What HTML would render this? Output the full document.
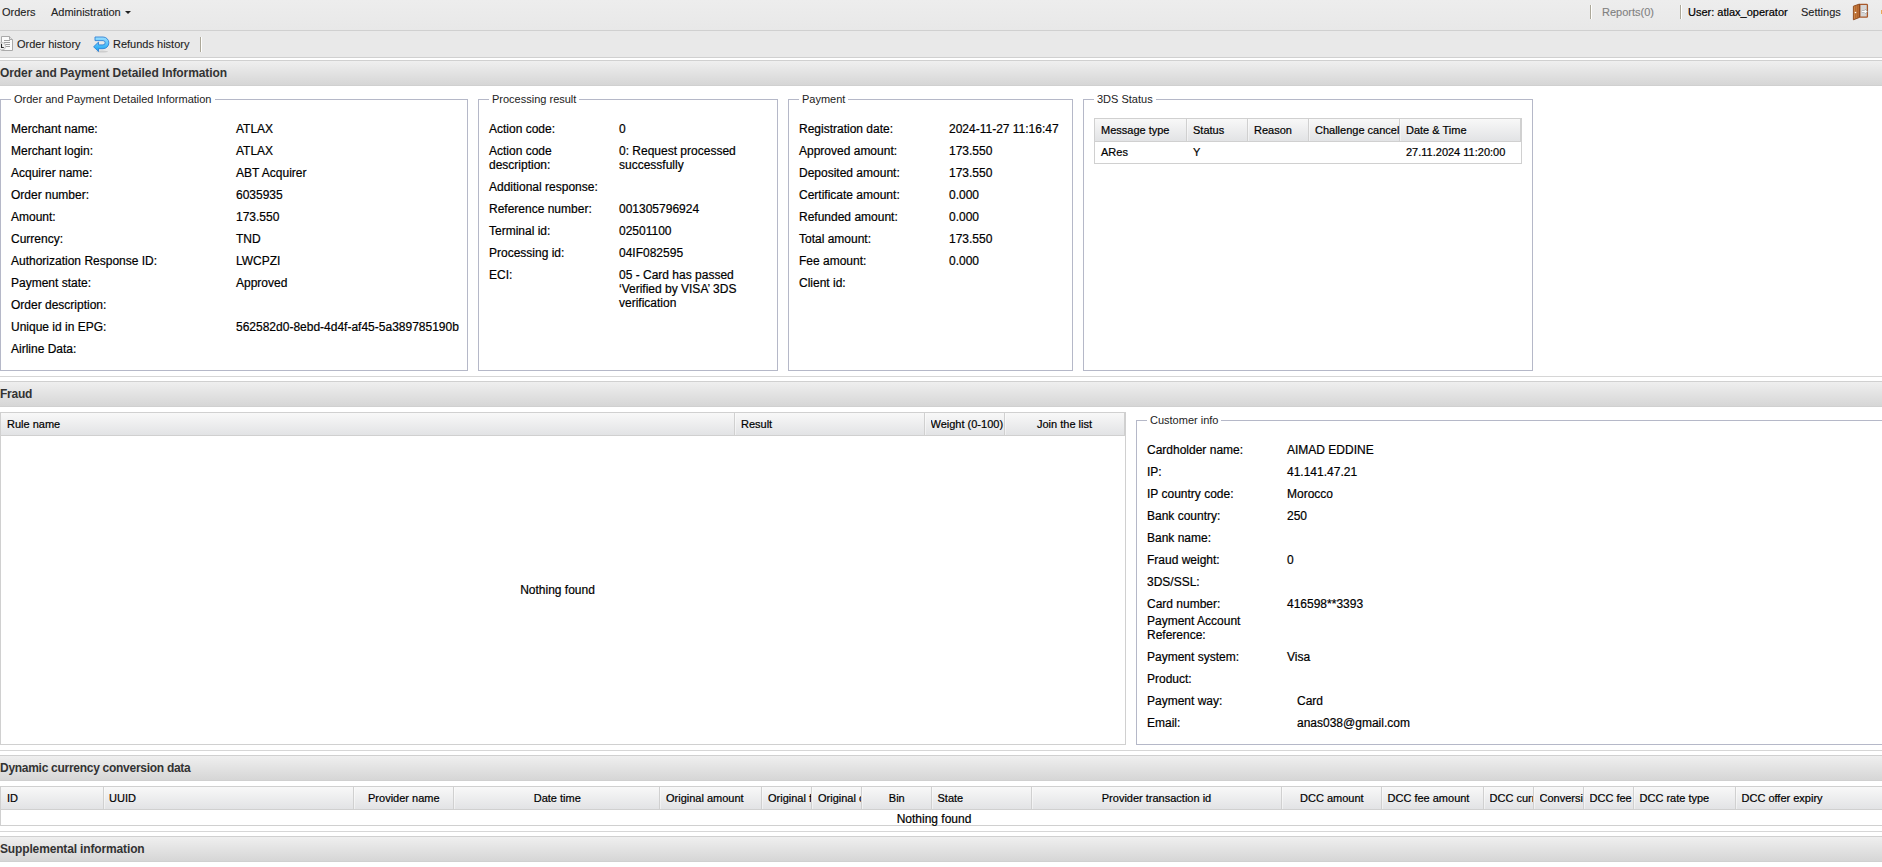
<!DOCTYPE html>
<html><head><meta charset="utf-8"><style>
*{box-sizing:border-box;margin:0;padding:0}
html,body{width:1882px;height:867px;overflow:hidden;background:#fff}
body{font-family:"Liberation Sans",sans-serif;font-size:12px;color:#000;position:relative}
.a{position:absolute}
.t{position:absolute;line-height:14px;white-space:nowrap;-webkit-text-stroke:0.2px #000}
#top{left:0;top:0;width:1882px;height:31px;background:linear-gradient(#ededed,#e8e8e8);border-bottom:1px solid #d0d0d0}
#tb{left:0;top:31px;width:1882px;height:27px;background:#e9e9e9;border-bottom:1px solid #d0d0d0}
.hdr{position:absolute;left:0;width:1882px;height:26px;border-top:1px solid #d0d0d0;border-bottom:1px solid #d0d0d0;background:linear-gradient(#efefef,#d6d6d6)}
.hdr div{position:absolute;left:0;top:5px;line-height:14px;font-weight:bold;color:#333;letter-spacing:-0.1px;white-space:nowrap}
.hr{position:absolute;left:0;width:1882px;height:1px;background:#d6d6d6}
.fs{position:absolute;border:1px solid #b5b8c8}
.lg{position:absolute;font-size:11px;line-height:14px;background:#fff;padding:0 3px;white-space:nowrap;color:#222}
.grid{position:absolute;border:1px solid #d0d0d0;background:#fff}
.gh{position:absolute;left:0;top:0;right:0;height:23px;background:linear-gradient(#f8f8f8,#e2e3e5);border-bottom:1px solid #d0d0d0}
.sep{position:absolute;top:0;width:2px;height:22px;border-left:1px solid #d0d0d0;border-right:1px solid rgba(255,255,255,0.45)}
.g{font-size:11px}
</style></head><body>
<div id="top" class="a">
<div class="t" style="left:2px;top:5px;font-size:11px;color:#222;-webkit-text-stroke:0.1px #222">Orders</div>
<div class="t" style="left:51px;top:5px;font-size:11px;color:#222;-webkit-text-stroke:0.1px #222">Administration</div>
<div class="a" style="left:125px;top:11px;width:0;height:0;border-left:3px solid transparent;border-right:3px solid transparent;border-top:3px solid #222"></div>
<div class="a" style="left:1590px;top:5px;width:1px;height:14px;background:#aca899;box-shadow:1px 0 0 #fff"></div>
<div class="t" style="left:1602px;top:5px;font-size:11px;color:#808080;-webkit-text-stroke:0.1px #808080">Reports(0)</div>
<div class="a" style="left:1680px;top:5px;width:1px;height:14px;background:#aca899;box-shadow:1px 0 0 #fff"></div>
<div class="t" style="left:1688px;top:5px;font-size:11px;color:#000">User: atlax_operator</div>
<div class="t" style="left:1801px;top:5px;font-size:11px;color:#222;-webkit-text-stroke:0.1px #222">Settings</div>
<svg class="a" style="left:1846px;top:0" width="26" height="24" viewBox="0 0 26 24"><defs><linearGradient id="dg" x1="0" y1="0" x2="1" y2="0"><stop offset="0" stop-color="#d08848"/><stop offset="1" stop-color="#b86a30"/></linearGradient></defs><rect x="13.8" y="4.4" width="7.6" height="12.8" rx="0.8" fill="#d6d6d6" stroke="#a8582a" stroke-width="1.3"/><path d="M15.8 11.6 H20.2 M18.6 9.8 L20.4 11.6 L18.6 13.4" stroke="#999" stroke-width="2.2" fill="none"/><path d="M15.8 11.6 H20.2 M18.6 9.8 L20.4 11.6 L18.6 13.4" stroke="#fff" stroke-width="1.1" fill="none"/><path d="M7.4 6.2 L13.5 4 V17.4 L7.4 19.8 Z" fill="url(#dg)" stroke="#8a4418" stroke-width="0.9" stroke-linejoin="round"/><path d="M9.6 5.6 V18.8 M11.6 4.9 V18" stroke="#a85a24" stroke-width="0.6"/><circle cx="9.5" cy="12.5" r="0.8" fill="#fff"/></svg>
<div class="a" style="left:1881px;top:10px;width:3px;height:4px;background:linear-gradient(90deg,#f0b060,#c8782a)"></div>
</div>
<div id="tb" class="a">
</div>
<svg class="a" style="left:0;top:32px" width="20" height="24" viewBox="0 0 20 24"><path d="M1.5 4.5 H9.5 L12.5 7.5 V18.5 H1.5 Z" fill="#fbfbfb" stroke="#a9a9a9"/><path d="M9.5 4.5 V7.5 H12.5" fill="#e0e0e0" stroke="#a9a9a9"/><path d="M4 8.5 H10 M4 10.5 H10 M5 12.5 H10 M6 14.5 H10" stroke="#a0a0a0"/><circle cx="1.8" cy="14.2" r="3.8" fill="#f2f2f2" stroke="#c4c4c4"/><path d="M1.5 11.8 V15.5 H3.8" stroke="#2a2a2a" stroke-width="1.1" fill="none"/></svg>
<div class="t" style="left:17px;top:37px;font-size:11px;color:#222;-webkit-text-stroke:0.1px #222">Order history</div>
<svg class="a" style="left:90px;top:33px" width="22" height="22" viewBox="0 0 22 22"><defs><linearGradient id="rg" x1="0" y1="0" x2="0" y2="1"><stop offset="0" stop-color="#9ee0ff"/><stop offset="1" stop-color="#12a2f2"/></linearGradient></defs><ellipse cx="12" cy="18.6" rx="6" ry="1" fill="#bbb" opacity="0.6"/><path d="M5 4 H13 A5.85 5.85 0 0 1 13 15.7 H8.5 V18.5 L3.6 13.8 L8.5 9.1 V11.9 H13 A2.15 2.15 0 0 0 13 7.6 H5 Z" fill="url(#rg)" stroke="#2f82d6" stroke-width="0.9" stroke-linejoin="round"/></svg>
<div class="t" style="left:113px;top:37px;font-size:11px;color:#222;-webkit-text-stroke:0.1px #222">Refunds history</div>
<div class="a" style="left:200px;top:37px;width:1px;height:15px;background:#aca899;box-shadow:1px 0 0 #fff"></div>
<div class="hdr" style="top:60px"><div style="letter-spacing:-0.08px">Order and Payment Detailed Information</div></div>
<div class="hr" style="top:376px"></div>
<div class="hdr" style="top:381px"><div style="letter-spacing:-0.26px">Fraud</div></div>
<div class="hr" style="top:750px"></div>
<div class="hdr" style="top:755px"><div style="letter-spacing:-0.28px">Dynamic currency conversion data</div></div>
<div class="hr" style="top:831px"></div>
<div class="hdr" style="top:836px"><div style="letter-spacing:-0.146px">Supplemental information</div></div>
<div class="fs" style="left:0px;top:99px;width:468px;height:272px"></div>
<div class="lg" style="left:11px;top:92px">Order and Payment Detailed Information</div>
<div class="fs" style="left:478px;top:99px;width:300px;height:272px"></div>
<div class="lg" style="left:489px;top:92px">Processing result</div>
<div class="fs" style="left:788px;top:99px;width:285px;height:272px"></div>
<div class="lg" style="left:799px;top:92px">Payment</div>
<div class="fs" style="left:1083px;top:99px;width:450px;height:272px"></div>
<div class="lg" style="left:1094px;top:92px">3DS Status</div>
<div class="t" style="left:11px;top:122px;font-size:12px;">Merchant name:</div>
<div class="t" style="left:236px;top:122px;font-size:12px;">ATLAX</div>
<div class="t" style="left:11px;top:144px;font-size:12px;">Merchant login:</div>
<div class="t" style="left:236px;top:144px;font-size:12px;">ATLAX</div>
<div class="t" style="left:11px;top:166px;font-size:12px;">Acquirer name:</div>
<div class="t" style="left:236px;top:166px;font-size:12px;">ABT Acquirer</div>
<div class="t" style="left:11px;top:188px;font-size:12px;">Order number:</div>
<div class="t" style="left:236px;top:188px;font-size:12px;">6035935</div>
<div class="t" style="left:11px;top:210px;font-size:12px;">Amount:</div>
<div class="t" style="left:236px;top:210px;font-size:12px;">173.550</div>
<div class="t" style="left:11px;top:232px;font-size:12px;">Currency:</div>
<div class="t" style="left:236px;top:232px;font-size:12px;">TND</div>
<div class="t" style="left:11px;top:254px;font-size:12px;">Authorization Response ID:</div>
<div class="t" style="left:236px;top:254px;font-size:12px;">LWCPZI</div>
<div class="t" style="left:11px;top:276px;font-size:12px;">Payment state:</div>
<div class="t" style="left:236px;top:276px;font-size:12px;">Approved</div>
<div class="t" style="left:11px;top:298px;font-size:12px;">Order description:</div>
<div class="t" style="left:11px;top:320px;font-size:12px;">Unique id in EPG:</div>
<div class="t" style="left:236px;top:320px;font-size:12px;">562582d0-8ebd-4d4f-af45-5a389785190b</div>
<div class="t" style="left:11px;top:342px;font-size:12px;">Airline Data:</div>
<div class="t" style="left:489px;top:122px;font-size:12px;">Action code:</div>
<div class="t" style="left:619px;top:122px;font-size:12px;">0</div>
<div class="t" style="left:489px;top:144px;font-size:12px;">Action code</div>
<div class="t" style="left:489px;top:158px;font-size:12px;">description:</div>
<div class="t" style="left:619px;top:144px;font-size:12px;">0: Request processed</div>
<div class="t" style="left:619px;top:158px;font-size:12px;">successfully</div>
<div class="t" style="left:489px;top:180px;font-size:12px;">Additional response:</div>
<div class="t" style="left:489px;top:202px;font-size:12px;">Reference number:</div>
<div class="t" style="left:619px;top:202px;font-size:12px;">001305796924</div>
<div class="t" style="left:489px;top:224px;font-size:12px;">Terminal id:</div>
<div class="t" style="left:619px;top:224px;font-size:12px;">02501100</div>
<div class="t" style="left:489px;top:246px;font-size:12px;">Processing id:</div>
<div class="t" style="left:619px;top:246px;font-size:12px;">04IF082595</div>
<div class="t" style="left:489px;top:268px;font-size:12px;">ECI:</div>
<div class="t" style="left:619px;top:268px;font-size:12px;">05 - Card has passed</div>
<div class="t" style="left:619px;top:282px;font-size:12px;">&#8216;Verified by VISA&#8217; 3DS</div>
<div class="t" style="left:619px;top:296px;font-size:12px;">verification</div>
<div class="t" style="left:799px;top:122px;font-size:12px;">Registration date:</div>
<div class="t" style="left:949px;top:122px;font-size:12px;">2024-11-27 11:16:47</div>
<div class="t" style="left:799px;top:144px;font-size:12px;">Approved amount:</div>
<div class="t" style="left:949px;top:144px;font-size:12px;">173.550</div>
<div class="t" style="left:799px;top:166px;font-size:12px;">Deposited amount:</div>
<div class="t" style="left:949px;top:166px;font-size:12px;">173.550</div>
<div class="t" style="left:799px;top:188px;font-size:12px;">Certificate amount:</div>
<div class="t" style="left:949px;top:188px;font-size:12px;">0.000</div>
<div class="t" style="left:799px;top:210px;font-size:12px;">Refunded amount:</div>
<div class="t" style="left:949px;top:210px;font-size:12px;">0.000</div>
<div class="t" style="left:799px;top:232px;font-size:12px;">Total amount:</div>
<div class="t" style="left:949px;top:232px;font-size:12px;">173.550</div>
<div class="t" style="left:799px;top:254px;font-size:12px;">Fee amount:</div>
<div class="t" style="left:949px;top:254px;font-size:12px;">0.000</div>
<div class="t" style="left:799px;top:276px;font-size:12px;">Client id:</div>
<div class="grid" style="left:1094px;top:118px;width:428px;height:46px"><div class="gh"></div><div class="sep" style="left:91px"></div><div class="sep" style="left:152px"></div><div class="sep" style="left:213px"></div><div class="sep" style="left:304px"></div><div class="a" style="left:425px;top:0;width:1px;height:22px;background:#d0d0d0"></div></div>
<div class="t" style="left:1101px;top:123px;font-size:11px;">Message type</div>
<div class="t" style="left:1193px;top:123px;font-size:11px;">Status</div>
<div class="t" style="left:1254px;top:123px;font-size:11px;">Reason</div>
<div class="t" style="left:1315px;top:123px;font-size:11px;">Challenge cancel</div>
<div class="t" style="left:1406px;top:123px;font-size:11px;">Date &amp; Time</div>
<div class="t" style="left:1101px;top:145px;font-size:11px;">ARes</div>
<div class="t" style="left:1193px;top:145px;font-size:11px;">Y</div>
<div class="t" style="left:1406px;top:145px;font-size:11px;">27.11.2024 11:20:00</div>
<div class="grid" style="left:0;top:412px;width:1126px;height:333px"><div class="gh"></div><div class="sep" style="left:733px"></div><div class="sep" style="left:923px"></div><div class="sep" style="left:1003px"></div><div class="a" style="left:1123px;top:0;width:1px;height:22px;background:#d0d0d0"></div></div>
<div class="t" style="left:7px;top:417px;font-size:11px;">Rule name</div>
<div class="t" style="left:741px;top:417px;font-size:11px;">Result</div>
<div class="t" style="left:930.5px;width:73.5px;overflow:hidden;top:417px;font-size:11px">Weight (0-100)</div>
<div class="t" style="left:914.5px;width:300px;text-align:center;top:417px;font-size:11px">Join the list</div>
<div class="t" style="left:407.5px;width:300px;text-align:center;top:583px;font-size:12px">Nothing found</div>
<div class="fs" style="left:1136px;top:420px;width:755px;height:325px"></div>
<div class="lg" style="left:1147px;top:413px">Customer info</div>
<div class="t" style="left:1147px;top:443px;font-size:12px;">Cardholder name:</div>
<div class="t" style="left:1287px;top:443px;font-size:12px;">AIMAD EDDINE</div>
<div class="t" style="left:1147px;top:465px;font-size:12px;">IP:</div>
<div class="t" style="left:1287px;top:465px;font-size:12px;">41.141.47.21</div>
<div class="t" style="left:1147px;top:487px;font-size:12px;">IP country code:</div>
<div class="t" style="left:1287px;top:487px;font-size:12px;">Morocco</div>
<div class="t" style="left:1147px;top:509px;font-size:12px;">Bank country:</div>
<div class="t" style="left:1287px;top:509px;font-size:12px;">250</div>
<div class="t" style="left:1147px;top:531px;font-size:12px;">Bank name:</div>
<div class="t" style="left:1147px;top:553px;font-size:12px;">Fraud weight:</div>
<div class="t" style="left:1287px;top:553px;font-size:12px;">0</div>
<div class="t" style="left:1147px;top:575px;font-size:12px;">3DS/SSL:</div>
<div class="t" style="left:1147px;top:597px;font-size:12px;">Card number:</div>
<div class="t" style="left:1287px;top:597px;font-size:12px;">416598**3393</div>
<div class="t" style="left:1147px;top:614px;font-size:12px;">Payment Account</div>
<div class="t" style="left:1147px;top:628px;font-size:12px;">Reference:</div>
<div class="t" style="left:1147px;top:650px;font-size:12px;">Payment system:</div>
<div class="t" style="left:1287px;top:650px;font-size:12px;">Visa</div>
<div class="t" style="left:1147px;top:672px;font-size:12px;">Product:</div>
<div class="t" style="left:1147px;top:694px;font-size:12px;">Payment way:</div>
<div class="t" style="left:1297px;top:694px;font-size:12px;">Card</div>
<div class="t" style="left:1147px;top:716px;font-size:12px;">Email:</div>
<div class="t" style="left:1297px;top:716px;font-size:12px;">anas038@gmail.com</div>
<div class="grid" style="left:0;top:786px;width:1890px;height:40px"><div class="gh"></div><div class="sep" style="left:102px"></div><div class="sep" style="left:352px"></div><div class="sep" style="left:452px"></div><div class="sep" style="left:658px"></div><div class="sep" style="left:760px"></div><div class="sep" style="left:810px"></div><div class="sep" style="left:860px"></div><div class="sep" style="left:930px"></div><div class="sep" style="left:1030px"></div><div class="sep" style="left:1280px"></div><div class="sep" style="left:1380px"></div><div class="sep" style="left:1482px"></div><div class="sep" style="left:1532px"></div><div class="sep" style="left:1582px"></div><div class="sep" style="left:1632px"></div><div class="sep" style="left:1734px"></div></div>
<div class="t" style="left:7px;top:791px;font-size:11px;">ID</div>
<div class="t" style="left:109px;top:791px;font-size:11px;">UUID</div>
<div class="t" style="left:253.8px;width:300px;text-align:center;top:791px;font-size:11px">Provider name</div>
<div class="t" style="left:407.29999999999995px;width:300px;text-align:center;top:791px;font-size:11px">Date time</div>
<div class="t" style="left:666px;top:791px;font-size:11px;">Original amount</div>
<div class="t" style="left:768px;width:43px;overflow:hidden;top:791px;font-size:11px">Original fee</div>
<div class="t" style="left:818px;width:43px;overflow:hidden;top:791px;font-size:11px">Original currency</div>
<div class="t" style="left:746.8px;width:300px;text-align:center;top:791px;font-size:11px">Bin</div>
<div class="t" style="left:937.5px;top:791px;font-size:11px;">State</div>
<div class="t" style="left:1006.5px;width:300px;text-align:center;top:791px;font-size:11px">Provider transaction id</div>
<div class="t" style="left:1181.8px;width:300px;text-align:center;top:791px;font-size:11px">DCC amount</div>
<div class="t" style="left:1387.5px;top:791px;font-size:11px;">DCC fee amount</div>
<div class="t" style="left:1489.5px;width:43.5px;overflow:hidden;top:791px;font-size:11px">DCC currency</div>
<div class="t" style="left:1539.5px;width:43.5px;overflow:hidden;top:791px;font-size:11px">Conversion rate</div>
<div class="t" style="left:1589.5px;width:43.5px;overflow:hidden;top:791px;font-size:11px">DCC fee</div>
<div class="t" style="left:1639.5px;top:791px;font-size:11px;">DCC rate type</div>
<div class="t" style="left:1741.5px;top:791px;font-size:11px;">DCC offer expiry</div>
<div class="t" style="left:784px;width:300px;text-align:center;top:812px;font-size:12px">Nothing found</div>
</body></html>
